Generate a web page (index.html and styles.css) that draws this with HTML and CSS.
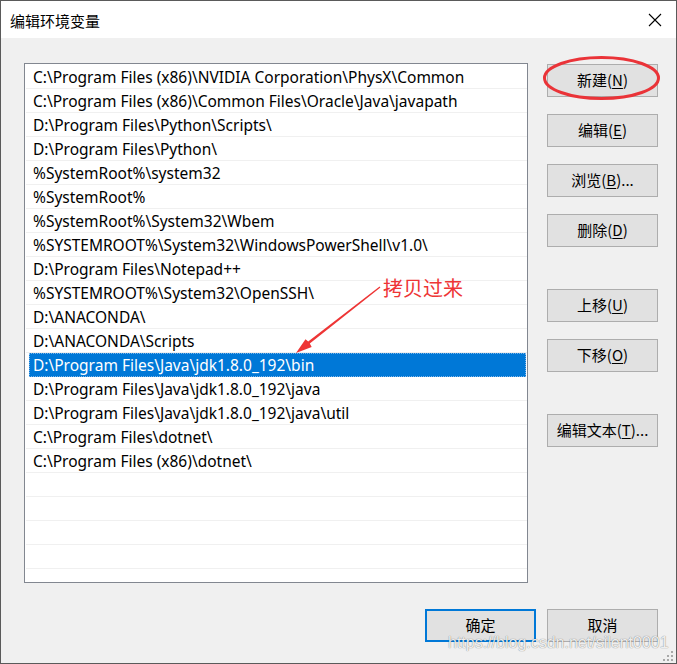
FILE: index.html
```html
<!DOCTYPE html>
<html lang="zh-CN">
<head>
<meta charset="utf-8">
<title>编辑环境变量</title>
<link rel="stylesheet" href="styles.css">
</head>
<body>
<div class="dialog">
  <div class="titlebar">
    <span class="title">编辑环境变量</span>
    <svg class="close" width="14" height="14" viewBox="0 0 14 14"><path d="M1 1 L13 13 M13 1 L1 13" stroke="#000" stroke-width="1.1" fill="none"/></svg>
  </div>
  <div class="body">
    <div class="list">
      <div class="row">C:\Program Files (x86)\NVIDIA Corporation\PhysX\Common</div>
      <div class="row">C:\Program Files (x86)\Common Files\Oracle\Java\javapath</div>
      <div class="row">D:\Program Files\Python\Scripts\</div>
      <div class="row">D:\Program Files\Python\</div>
      <div class="row">%SystemRoot%\system32</div>
      <div class="row">%SystemRoot%</div>
      <div class="row">%SystemRoot%\System32\Wbem</div>
      <div class="row">%SYSTEMROOT%\System32\WindowsPowerShell\v1.0\</div>
      <div class="row">D:\Program Files\Notepad++</div>
      <div class="row">%SYSTEMROOT%\System32\OpenSSH\</div>
      <div class="row">D:\ANACONDA\</div>
      <div class="row">D:\ANACONDA\Scripts</div>
      <div class="row selected"><span class="sel">D:\Program Files\Java\jdk1.8.0_192\bin</span></div>
      <div class="row">D:\Program Files\Java\jdk1.8.0_192\java</div>
      <div class="row">D:\Program Files\Java\jdk1.8.0_192\java\util</div>
      <div class="row">C:\Program Files\dotnet\</div>
      <div class="row">C:\Program Files (x86)\dotnet\</div>
      <div class="row"></div>
      <div class="row"></div>
      <div class="row"></div>
      <div class="row"></div>
      <div class="row"></div>
      <div class="row"></div>
    </div>
    <div class="side">
      <button class="btn">新建(<u>N</u>)</button>
      <button class="btn">编辑(<u>E</u>)</button>
      <button class="btn">浏览(<u>B</u>)...</button>
      <button class="btn">删除(<u>D</u>)</button>
      <button class="btn group">上移(<u>U</u>)</button>
      <button class="btn">下移(<u>O</u>)</button>
      <button class="btn group">编辑文本(<u>T</u>)...</button>
    </div>
  </div>
  <div class="footer">
    <button class="btn default">确定</button>
    <button class="btn">取消</button>
  </div>

  <svg class="annot" width="677" height="664" viewBox="0 0 677 664">
    <ellipse cx="601.5" cy="78" rx="57" ry="20.5" fill="none" stroke="#ea3338" stroke-width="3"/>
    <polygon points="380.4,287.4 379.6,286.6 308.2,341.5 305.5,339.2 296,353 311.7,347 309.8,343.4" fill="#ee3535"/>
  </svg>
  <div class="note">拷贝过来</div>
  <div class="watermark">https://blog.csdn.net/silent0001</div>
  <svg class="grip" width="12" height="12" viewBox="0 0 12 12">
    <rect x="8" y="0" width="2" height="2" fill="#a8a8a8"/>
    <rect x="4" y="4" width="2" height="2" fill="#a8a8a8"/>
    <rect x="8" y="4" width="2" height="2" fill="#a8a8a8"/>
    <rect x="0" y="8" width="2" height="2" fill="#a8a8a8"/>
    <rect x="4" y="8" width="2" height="2" fill="#a8a8a8"/>
    <rect x="8" y="8" width="2" height="2" fill="#a8a8a8"/>
  </svg>
</div>
</body>
</html>
```
FILE: styles.css
```css
* { box-sizing: border-box; }
html, body { margin: 0; padding: 0; }
body {
  width: 677px;
  height: 664px;
  overflow: hidden;
  font-family: "Noto Sans", "Noto Sans CJK SC", sans-serif;
  font-size: 15px;
  color: #000;
}
.dialog {
  position: relative;
  width: 677px;
  height: 664px;
  border: 1px solid #5a5a5a;
  background: #f0f0f0;
  display: flex;
  flex-direction: column;
}
.titlebar {
  height: 37px;
  background: #fff;
  display: flex;
  align-items: center;
  justify-content: space-between;
  padding: 0 14px 0 9px;
}
.title {
  font-family: "Noto Sans CJK SC", sans-serif;
  font-size: 15px;
  line-height: 1;
  margin-top: 1px;
}
.close { display: block; margin-top: 1px; }
.body {
  display: flex;
  gap: 19px;
  padding: 25px 18px 0 23px;
}
.list {
  width: 504px;
  height: 520px;
  border: 1px solid #828790;
  background: #fff;
  padding-top: 1px;
  overflow: hidden;
  font-size: 15.5px;
}
.row {
  height: 24px;
  line-height: 24px;
  border-bottom: 1px solid #f0f0f0;
  padding-left: 7px;
  margin-left: 1px;
  white-space: nowrap;
}
.row.selected {
  padding-left: 3px;
  padding-right: 1px;
  border-bottom-color: transparent;
}
.sel {
  display: block;
  height: 24px;
  background: #0078d7;
  color: #fff;
  padding-left: 4px;
  outline: 1px dotted #7fb6e8;
  outline-offset: -1px;
}
.side {
  width: 111px;
  margin-top: 1px;
  display: flex;
  flex-direction: column;
  gap: 17px;
}
.btn {
  width: 111px;
  height: 33px;
  background: #e1e1e1;
  border: 1px solid #adadad;
  font-family: "Noto Sans CJK SC", sans-serif;
  font-size: 15px;
  color: #000;
  padding: 0 0 2px 0;
  margin: 0;
  line-height: 1;
}
.btn u { text-underline-offset: 2px; text-decoration-thickness: 1px; }
.btn.group { margin-top: 25px; }
.btn.default { border: 2px solid #0078d7; }
.footer {
  display: flex;
  justify-content: flex-end;
  gap: 11px;
  padding: 26px 18px 0 0;
}
.annot {
  position: absolute;
  left: -1px;
  top: -1px;
  pointer-events: none;
}
.note {
  position: absolute;
  left: 382px;
  top: 275px;
  font-family: "Noto Sans CJK SC", sans-serif;
  font-size: 20px;
  line-height: 24px;
  color: #ee3535;
}
.watermark {
  position: absolute;
  left: 447px;
  top: 632px;
  font-family: "Liberation Sans", sans-serif;
  font-size: 16px;
  line-height: 20px;
  color: rgba(255, 255, 255, 0.9);
  text-shadow: 0 0 1px rgba(0, 0, 0, 0.45), 0 0 1px rgba(0, 0, 0, 0.2);
  white-space: nowrap;
}
.grip {
  position: absolute;
  right: 1px;
  bottom: 0px;
}
```
